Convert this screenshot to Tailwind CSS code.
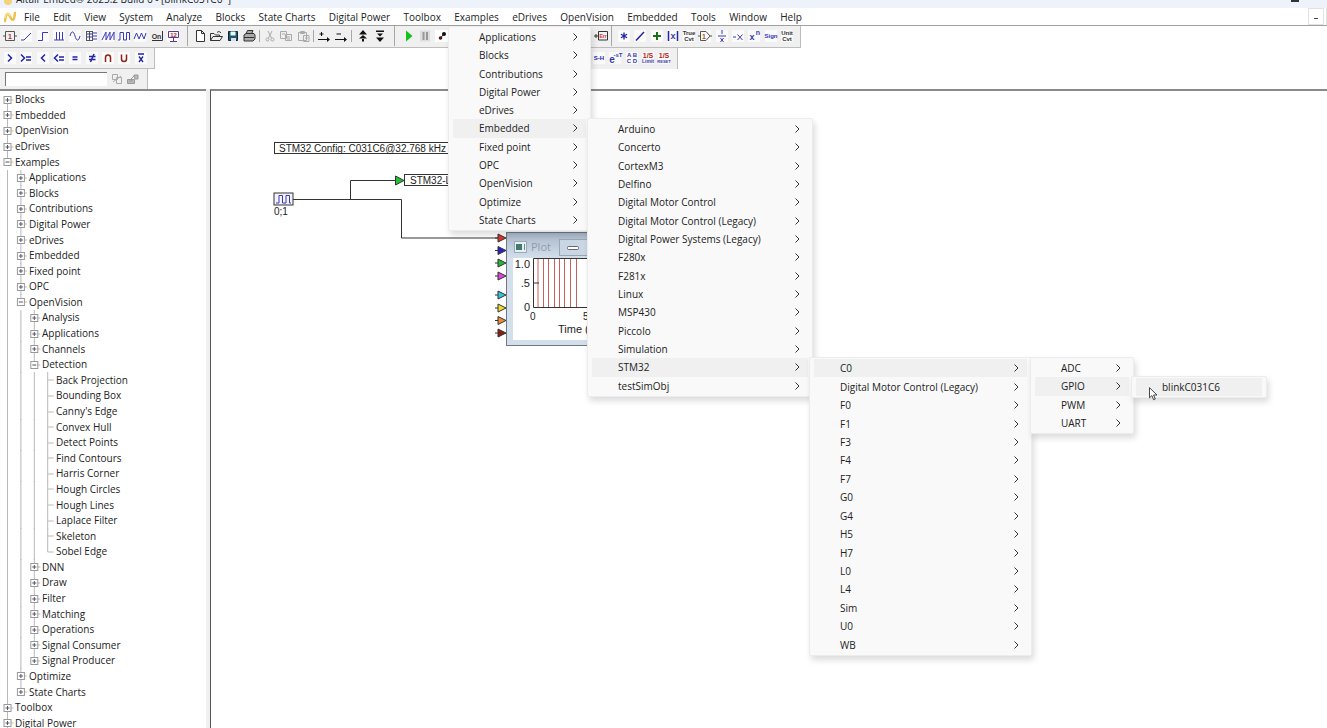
<!DOCTYPE html>
<html lang="en">

<head>
    <meta charset="UTF-8">
    <meta name="viewport" content="width=device-width, initial-scale=1.0">
    <title>Altair Embed - blinkC031C6</title>
    <script src="https://cdn.jsdelivr.net/npm/@tailwindcss/browser@4"></script>
</head>

<body class="relative flex h-screen flex-col overflow-hidden bg-white font-['Open_Sans',sans-serif] text-[10px] text-[#222]">

    <!-- Title bar -->
    <header class="flex h-2 shrink-0 items-end justify-between overflow-hidden bg-[#eef3fb] pr-7 pl-1">
        <h1 class="flex items-end gap-1 pb-[3px] text-[10px] leading-3 whitespace-nowrap">
            <span class="h-2 w-2 rounded-full bg-[#f3d27a]"></span>Altair Embed® 2025.2 Build 6 - [blinkC031C6*]
        </h1>
        <button aria-label="Restore" class="mb-[6px] h-2 w-2 border-b-2 border-[#333]"></button>
    </header>

    <!-- Menu bar -->
    <nav class="flex h-[18px] shrink-0 items-stretch border-b border-[#a0a0a0] bg-white">
        <svg class="mr-[2px] ml-1 h-4 w-3 self-center" viewBox="0 0 12 16" fill="none">
            <path d="M1 12C2 4 4 3 6 7.500S10 13 11 4" stroke="#f0c04a" stroke-width="2.500" stroke-linecap="round" />
            <path d="M1 9C2 4 4 3 6 7" stroke="#f8df9a" stroke-width="1.500" />
        </svg>
        <div id="menubar" class="flex w-[790px] justify-between"></div>
        <button aria-label="Minimize document" class="ml-auto w-4 border border-[#e2e2e2] pt-1 leading-none">
            <span class="mx-auto block h-px w-1 bg-[#444]"></span>
        </button>
        <button aria-label="Restore document" class="ml-[2px] w-px bg-[#e2e2e2]"></button>
    </nav>

    <!-- Toolbars -->
    <section class="shrink-0">
        <div class="flex h-[22px] w-[801px] items-center border-r border-b border-[#bdbdbd] bg-[#f0f0f0] pb-px pl-[2px]">
            <div class="flex w-[179px]" data-icons="const ramp step pulse sine bus saw square tri on display"></div>
            <i class="mr-1 ml-[6px] h-full w-px bg-[#a8a8a8]"></i>
            <div class="flex w-[65px]" data-icons="new open save print"></div>
            <i class="mx-[2px] h-3 w-px bg-[#a8a8a8]"></i>
            <div class="flex w-[49px]" data-icons="cut copy paste"></div>
            <i class="mx-[2px] h-3 w-px bg-[#a8a8a8]"></i>
            <div class="flex w-[33px]" data-icons="addPin delPin"></div>
            <i class="mx-[2px] h-3 w-px bg-[#a8a8a8]"></i>
            <div class="ml-px flex w-[33px]" data-icons="up down"></div>
            <i class="mx-[6px] h-full w-px bg-[#a8a8a8]"></i>
            <div class="flex w-[49px]" data-icons="play pause stepRun"></div>
            <div class="ml-auto flex w-4" data-icons="error"></div>
            <i class="mr-[4px] ml-px h-full w-px bg-[#a8a8a8]"></i>
            <div class="mr-[5px] flex w-[179px]" data-icons="mul div add abs trueCvt gain inv neg pow sign unitCvt"></div>
        </div>
        <div class="flex h-[21px] w-[678px] items-center border-r border-b border-[#bdbdbd] bg-[#f0f0f0]">
            <div class="flex h-full w-[155px] items-center border-r border-[#bdbdbd] pb-px pl-[2px]">
                <div class="flex w-[147px]" data-icons="gt ge lt le eq ne cap cup xbar"></div>
            </div>
            <div class="flex h-[21px] flex-1 items-center justify-end bg-white">
                <div class="flex h-full w-[100px] items-center justify-end bg-[#f0f0f0] pr-[5px] pb-px">
                    <div class="flex w-[81px]" data-icons="sh delay abcd limit reset"></div>
                </div>
            </div>
        </div>
        <div class="flex h-5 w-[148px] items-center border-r border-[#bdbdbd] bg-[#f0f0f0] pl-[5px]">
            <input aria-label="Find block" class="h-[14px] w-[102px] border-t border-l border-[#777] bg-white outline-none">
            <div class="ml-[2px] flex w-8" data-icons="find findNext"></div>
        </div>
    </section>

    <!-- Block tree and diagram -->
    <main class="flex min-h-0 flex-1">
        <aside class="w-[206px] shrink-0 border-t-2 border-[#8a8a8a] bg-white">
            <ul id="tree" class="grid h-[640px] auto-rows-fr pt-px"></ul>
        </aside>
        <div class="w-1 shrink-0 bg-[#f0f0f0]"></div>
        <section class="relative min-w-0 flex-1 overflow-hidden border-t-2 border-l border-[#8a8a8a] border-l-[#555]">
            <svg class="absolute top-0 left-0 h-[300px] w-[400px] font-['Liberation_Sans',sans-serif] text-[11px]"
                viewBox="211 91 400 300" fill="none" stroke="#333">
                <rect x="274.500" y="142.500" width="200" height="11" />
                <text x="279" y="152" class="text-[10px]" fill="#222" stroke="none">STM32 Config: C031C6@32.768 kHz</text>
                <rect x="404.500" y="174.500" width="100" height="11" />
                <text x="410" y="184" class="text-[10px]" fill="#222" stroke="none">STM32-LED</text>
                <path d="M293 199.500H401.500V238M350.500 199.500V180.500H396M401.500 238H498" />
                <path d="M395.500 176V185L404 180.500Z" fill="#1fc432" />
                <rect x="274" y="193" width="19" height="12" fill="#f3f3ff" />
                <path d="M276 203H279V195.500H282.500V203H286V195.500H289.500V203H291" stroke="#3a3ab0" />
                <text x="274" y="215" class="text-[10px]" fill="#222" stroke="none">0;1</text>

                <g id="ports"></g>

                <!-- Plot window -->
                <linearGradient id="caption" x2="0" y2="1">
                    <stop stop-color="#a9b8c9" />
                    <stop offset="1" stop-color="#d3dfeb" />
                </linearGradient>
                <rect x="506.500" y="232.500" width="100" height="113" fill="#d3dfeb" stroke="#6f7985" />
                <rect x="507" y="233" width="99" height="25" fill="url(#caption)" stroke="none" />
                <rect x="514.500" y="241.500" width="12" height="11" fill="#e8eeee" stroke="#9ab" />
                <rect x="516" y="244" width="6" height="6" fill="#3f7a70" stroke="none" />
                <path d="M524.500 244V250" stroke="#789" />
                <text x="531" y="251" class="font-['Open_Sans',sans-serif]" fill="#8e9cab" stroke="none">Plot</text>
                <rect x="559.500" y="239.500" width="40" height="16" fill="#c9d6e4" stroke="#98a7b8" />
                <rect x="567.500" y="246.500" width="11" height="3" fill="#fff" stroke="#667" rx="1" />
                <rect x="513" y="258" width="90" height="82" fill="#fff" stroke="none" />
                <path d="M538 258.500V307M543.500 258.500V307M548.500 258.500V307M554.500 258.500V307M559.500 258.500V307M564.500 258.500V307M570.500 258.500V307M576.500 258.500V307"
                    stroke="#c9605c" />
                <path d="M600 258.500H533.500V307.500H600M533 283H539" />
                <g fill="#222" stroke="none">
                    <text x="530" y="268" text-anchor="end">1.0</text>
                    <text x="530" y="287" text-anchor="end">.5</text>
                    <text x="530" y="311" text-anchor="end">0</text>
                    <text x="530" y="320" class="text-[10px]">0</text>
                    <text x="583" y="320" class="text-[10px]">5</text>
                    <text x="558" y="333">Time (sec)</text>
                </g>
            </svg>
        </section>
    </main>

    <!-- Cascading menus -->
    <div id="menus"></div>

    <svg class="absolute top-[387px] left-[1149px] h-[14px] w-[9px]" viewBox="0 0 9 14">
        <path d="M.5.7V10.800L2.900 8.600 4.600 12.700 6.300 12 4.600 8H8Z" fill="#fff" stroke="#333" stroke-width=".9" />
    </svg>

    <script>
        const menubar = ["File", "Edit", "View", "System", "Analyze", "Blocks", "State Charts", "Digital Power", "Toolbox",
            "Examples", "eDrives", "OpenVision", "Embedded", "Tools", "Window", "Help"];
        document.getElementById("menubar").innerHTML = menubar
            .map(m => `<button class="px-[6px] leading-4 whitespace-nowrap">${m}</button>`).join("");

        // place, items, highlighted item
        const menus = [
            ["top-[26px] left-[448px] h-[205px] w-[143px]", "Applications|Blocks|Contributions|Digital Power|eDrives|Embedded|Fixed point|OPC|OpenVision|Optimize|State Charts", "Embedded"],
            ["top-[118px] left-[587px] h-[279px] w-[226px]", "Arduino|Concerto|CortexM3|Delfino|Digital Motor Control|Digital Motor Control (Legacy)|Digital Power Systems (Legacy)|F280x|F281x|Linux|MSP430|Piccolo|Simulation|STM32|testSimObj", "STM32"],
            ["top-[357px] left-[809px] h-[299px] w-[223px]", "C0|Digital Motor Control (Legacy)|F0|F1|F3|F4|F7|G0|G4|H5|H7|L0|L4|Sim|U0|WB", "C0"],
            ["top-[357px] left-[1030px] h-[77px] w-[104px]", "ADC|GPIO|PWM|UART", "GPIO"],
            ["top-[376px] left-[1131px] h-[22px] w-[136px]", "blinkC031C6", "blinkC031C6"]
        ];
        const chevron = `<svg class="h-2 w-2" viewBox="0 0 8 8" fill="none" stroke="#333"><path d="M2.500.5 6 4 2.500 7.500"/></svg>`;
        document.getElementById("menus").innerHTML = menus.map(([place, items, active]) => `
            <ul class="absolute ${place} grid auto-rows-fr rounded-[2px] border border-[#ececec] bg-[#f9f9f9] px-1 py-px shadow-[2px_4px_6px_rgba(0,0,0,0.14)]">
                ${items.split("|").map(t => `<li class="flex min-h-0 ${t === active ? "bg-[#f0f0f0]" : ""}">
                    <button class="flex flex-1 items-center justify-between pr-[7px] pl-[26px] leading-4 whitespace-nowrap">${t}${t === "blinkC031C6" ? "" : chevron}</button></li>`).join("")}
            </ul>`).join("");

        // [depth, sign, label]; "L" marks the last leaf of a branch
        const tree = [];
        const add = (depth, sign, labels) => labels.split("|").forEach(l => tree.push([depth, sign, l]));
        add(0, "+", "Blocks|Embedded|OpenVision|eDrives");
        add(0, "-", "Examples");
        add(1, "+", "Applications|Blocks|Contributions|Digital Power|eDrives|Embedded|Fixed point|OPC");
        add(1, "-", "OpenVision");
        add(2, "+", "Analysis|Applications|Channels");
        add(2, "-", "Detection");
        add(3, "", "Back Projection|Bounding Box|Canny's Edge|Convex Hull|Detect Points|Find Contours|Harris Corner|Hough Circles|Hough Lines|Laplace Filter|Skeleton");
        add(3, "L", "Sobel Edge");
        add(2, "+", "DNN|Draw|Filter|Matching|Operations|Signal Consumer|Signal Producer");
        add(1, "+", "Optimize|State Charts");
        add(0, "+", "Toolbox|Digital Power");

        document.getElementById("tree").innerHTML = tree.map(([depth, sign, label], i) => {
            const next = tree[i + 1];
            let svg = "";
            for (let d = 0; d < depth; d++) svg += `<path d="M${7.5 + d * 13.4} 0V16"/>`;
            const x = 7.5 + depth * 13.4;
            const end = sign === "L" || (next && next[0] < depth) ? 8 : 16;
            svg += `<path d="M${x} ${i ? 0 : 8}V${sign === "-" ? 8 : end}M${x} 8H${x + 6}"/>`;
            if (sign === "+" || sign === "-") {
                svg += `<rect x="${x - 3.5}" y="4.500" width="7" height="7" fill="#fff" stroke="#999"/><path stroke="#556" d="M${x - 2} 8H${x + 2}${sign === "+" ? `M${x} 6V10` : ""}"/>`;
            }
            const width = ["w-[15px]", "w-[29px]", "w-[42px]", "w-[56px]"][depth];
            return `<li class="flex min-h-0 items-center"><svg class="h-4 ${width} shrink-0" fill="none" stroke="#b9b9b9">${svg}</svg><button class="leading-[15px] whitespace-nowrap">${label}</button></li>`;
        }).join("");

        const ports = [["#e03228", 238], ["#2222c8", 250.5], ["#22b832", 263], ["#dd44dd", 276], ["#2cc4d8", 295], ["#f4dc2c", 308], ["#f08c30", 320.5], ["#8c1c10", 333]];
        document.getElementById("ports").innerHTML = ports
            .map(([c, y]) => `<path d="M495 ${y}H498M498 ${y - 4}V${y + 4}L506 ${y}Z" fill="${c}"/>`).join("");

        // Toolbar glyphs on a 16x16 grid
        const p = (d, c = "#3a3ab8", more = "") => `<path d="${d}" stroke="${c}" ${more}/>`;
        const t = (s, x, y, size, c = "#3a3ab0", more = "") => `<text x="${x}" y="${y}" font-size="${size}" fill="${c}" stroke="none" text-anchor="middle" font-weight="bold" ${more}>${s}</text>`;
        const icons = {
            const: p("M3.500 3.500H12.500V12.500H3.500ZM12.500 8H15M1 8H3", "#555") + t("1", 8, 11, 7, "#a33"),
            ramp: p("M3 12H6L13 5"),
            step: p("M3 12.500H7.500V4.500H13"),
            pulse: p("M3 12H13M5.500 12V4M8.500 12V4M11.500 12V4"),
            sine: p("M3 8C4.500 2 6.500 3 8 8S11.500 14 13 8"),
            bus: p("M3 3.500H9M3 12.500H9M3.500 3V13M6.500 3V13M9.500 3V13", "#555") + p("M10 5H14M10 8H14M10 11H14M4 6H9M4 9H9"),
            saw: p("M2 12 6 4V12L10 4V12L14 4V12"),
            square: p("M2 12H4V4.500H7.500V12H10.500V4.500H13.500V12"),
            tri: p("M2 11 4.500 5 7 11 9.500 5 12 11 14 5"),
            on: p("M3 12.500H13.500V3", "#333") + t("On", 7.5, 11, 7, "#333"),
            display: p("M3.500 3.500H13.500V9.500H3.500ZM8.500 10V13M5 13.500H12", "#5a3a8a") + t("12", 8.5, 9, 6, "#a33"),
            new: p("M4.500 2.500H9.500L12.500 5.500V13.500H4.500ZM9.500 2.500V5.500H12.500", "#333", 'fill="#fff"'),
            open: p("M2.500 12.500V5.500H6L7.500 7H11.500V8.500M2.500 12.500 5 8.500H14.500L12 12.500ZM9 4.500C10.500 3 12 3.500 13 5", "#333"),
            save: p("M3.500 3.500H12.500V12.500H3.500Z", "#123", 'fill="#23566e"') + `<path d="M5.500 3.500h5v4h-5z" fill="#dff" stroke="none"/><path d="M6 10h5v3H6z" fill="#dde" stroke="none"/>`,
            print: p("M5 6 6.500 2.500H12L10.500 6M3 7 5 5.500H13L14 7V11L12 13H3ZM3 9.500H13", "#333", 'fill="#aaa"'),
            cut: p("M6 3 9.500 10M10 3 6.500 10", "#aaa") + `<g stroke="#aaa"><circle cx="5.500" cy="11.500" r="1.500"/><circle cx="10.500" cy="11.500" r="1.500"/></g>`,
            copy: p("M2.500 3.500H8.500V10.500H2.500ZM7.500 6.500H13.500V12.500H7.500ZM4 6H7M9 9H12M9 11H12", "#aaa", 'fill="#eee"'),
            paste: p("M3.500 4.500H11.500V12.500H3.500ZM5.500 3.500H9.500V5.500H5.500ZM8.500 7.500H14V13.500H8.500ZM10 10H13", "#aaa", 'fill="#eee"'),
            addPin: p("M2 11.500H13M5.500 4V8M3.500 6H7.500", "#111") + `<path d="M11 9V14L14 11.500Z" fill="#111"/>`,
            delPin: p("M2 11.500H13M3.500 6H8", "#111") + `<path d="M11 9V14L14 11.500Z" fill="#111"/>`,
            up: `<path d="M8 2 12 6.500H4ZM8 7 12 10.500H4ZM7 11h2v2.500H7z" fill="#111"/>`,
            down: `<path d="M8 14 4 9.500H12ZM8 8.500 5 5.500H11ZM4 2.500h8v1.500H4z" fill="#111"/>`,
            play: `<path d="M5 2.500V13.500L11.500 8Z" fill="#12c41a"/>`,
            pause: `<path d="M3 2.500h10v11H3z" fill="#ddd"/>` + p("M6.500 4V12M10 4V12", "#999", 'stroke-width="2"'),
            stepRun: `<path d="M1 2h14v12H1z" fill="#fff"/><path d="M6 10.500 10 6" stroke="#311"/><circle cx="10" cy="6" r="2" fill="#111"/><circle cx="6.500" cy="10" r="1.800" fill="#511"/>`,
            error: p("M4.500 3.500H13.500V12H4.500ZM0 8H4M2 6V10", "#333") + t("Err", 9, 10, 5, "#c33"),
            mul: p("M8 4.500V11.500M5 6.200 11 9.800M11 6.200 5 9.800", "#22a", 'stroke-width="1.300"'),
            div: p("M4 12.500 12 4", "#22a", 'stroke-width="1.500"'),
            add: p("M8 4V12M4 8H12", "#187018", 'stroke-width="2"'),
            abs: p("M3.500 3V13M12.500 3V13", "#22a", 'stroke-width="1.500"') + t("x", 8, 11, 9),
            trueCvt: t("True", 8, 7, 6, "#333") + t("Cvt", 8, 13, 6, "#333"),
            gain: p("M3.500 3.500H9L13 8 9 12.500H3.500ZM13 8H15M1 8H3", "#555") + t("1", 7, 10.5, 7, "#a52"),
            inv: p("M4 8H12M8 2V6M6.500 10 9.500 14M9.500 10 6.500 14"),
            neg: p("M3 9H6M7.500 6.500 12.500 12M12.500 6.500 7.500 12"),
            pow: t("x", 6, 12, 9) + t("n", 12, 7, 7),
            sign: t("Sign", 8, 10, 6, "#33b"),
            unitCvt: t("Unit", 8, 7, 6, "#333") + t("Cvt", 8, 13, 6, "#333"),
            gt: p("M6 4.500 9.500 8 6 11.500", "#22a", 'stroke-width="1.500"'),
            ge: p("M3 4.500 6.500 8 3 11.500M8 7H13M8 10H13", "#22a", 'stroke-width="1.500"'),
            lt: p("M10 4.500 6.500 8 10 11.500", "#22a", 'stroke-width="1.500"'),
            le: p("M7 4.500 3.500 8 7 11.500M8 7H13M8 10H13", "#22a", 'stroke-width="1.500"'),
            eq: p("M5.500 7H10.500M5.500 9.500H10.500", "#22a", 'stroke-width="1.500"'),
            ne: p("M5 6.500H11.500M5 9.500H11.500M10 4 6.500 12", "#22a", 'stroke-width="1.500"'),
            cap: p("M5.500 12V7.500Q5.500 5 8 5T10.500 7.500V12", "#8c2418", 'stroke-width="1.500"'),
            cup: p("M5.500 4.500V9Q5.500 11.500 8 11.500T10.500 9V4.500", "#8c2418", 'stroke-width="1.500"'),
            xbar: p("M5 4H11M6 6.500 10 12M10 6.500 6 12", "#22a", 'stroke-width="1.300"'),
            sh: t("S-H", 8, 10, 6, "#22a"),
            delay: t("e", 5, 13, 10) + t("-sT", 11, 7, 6),
            abcd: t("A B", 8, 7, 6) + t("C D", 8, 13, 6),
            limit: t("1/S", 8, 7.5, 7, "#b22") + t("Limit", 8, 13, 5),
            reset: t("1/S", 8, 7.5, 7, "#b22") + t("RESET", 8, 13, 4),
            find: p("M3.500 3.500H8.500V8.500H3.500ZM7.500 6.500H12.500V12.500H7.500ZM4 11 12 5", "#aaa"),
            findNext: p("M2.500 8.500H9.500V12.500H2.500ZM6 8 10 4M9 4H13V8H10ZM4 10H8", "#999", 'fill="#bbb"')
        };
        const plain = "new open save print cut copy paste addPin delPin up down play pause stepRun find findNext const on error".split(" ");
        document.querySelectorAll("[data-icons]").forEach(el => {
            el.innerHTML = el.dataset.icons.split(" ").map(n => `<button aria-label="${n}" class="flex min-w-0 flex-1 justify-center">
                <svg class="h-4 w-4 shrink-0 font-['Liberation_Sans',sans-serif]" viewBox="0 0 16 16" fill="none">${plain.includes(n) ? "" : '<path d="M2 2H14V14H2Z" fill="#fafafa"/>'}${icons[n]}</svg></button>`).join("");
        });
    </script>

</body>

</html>
